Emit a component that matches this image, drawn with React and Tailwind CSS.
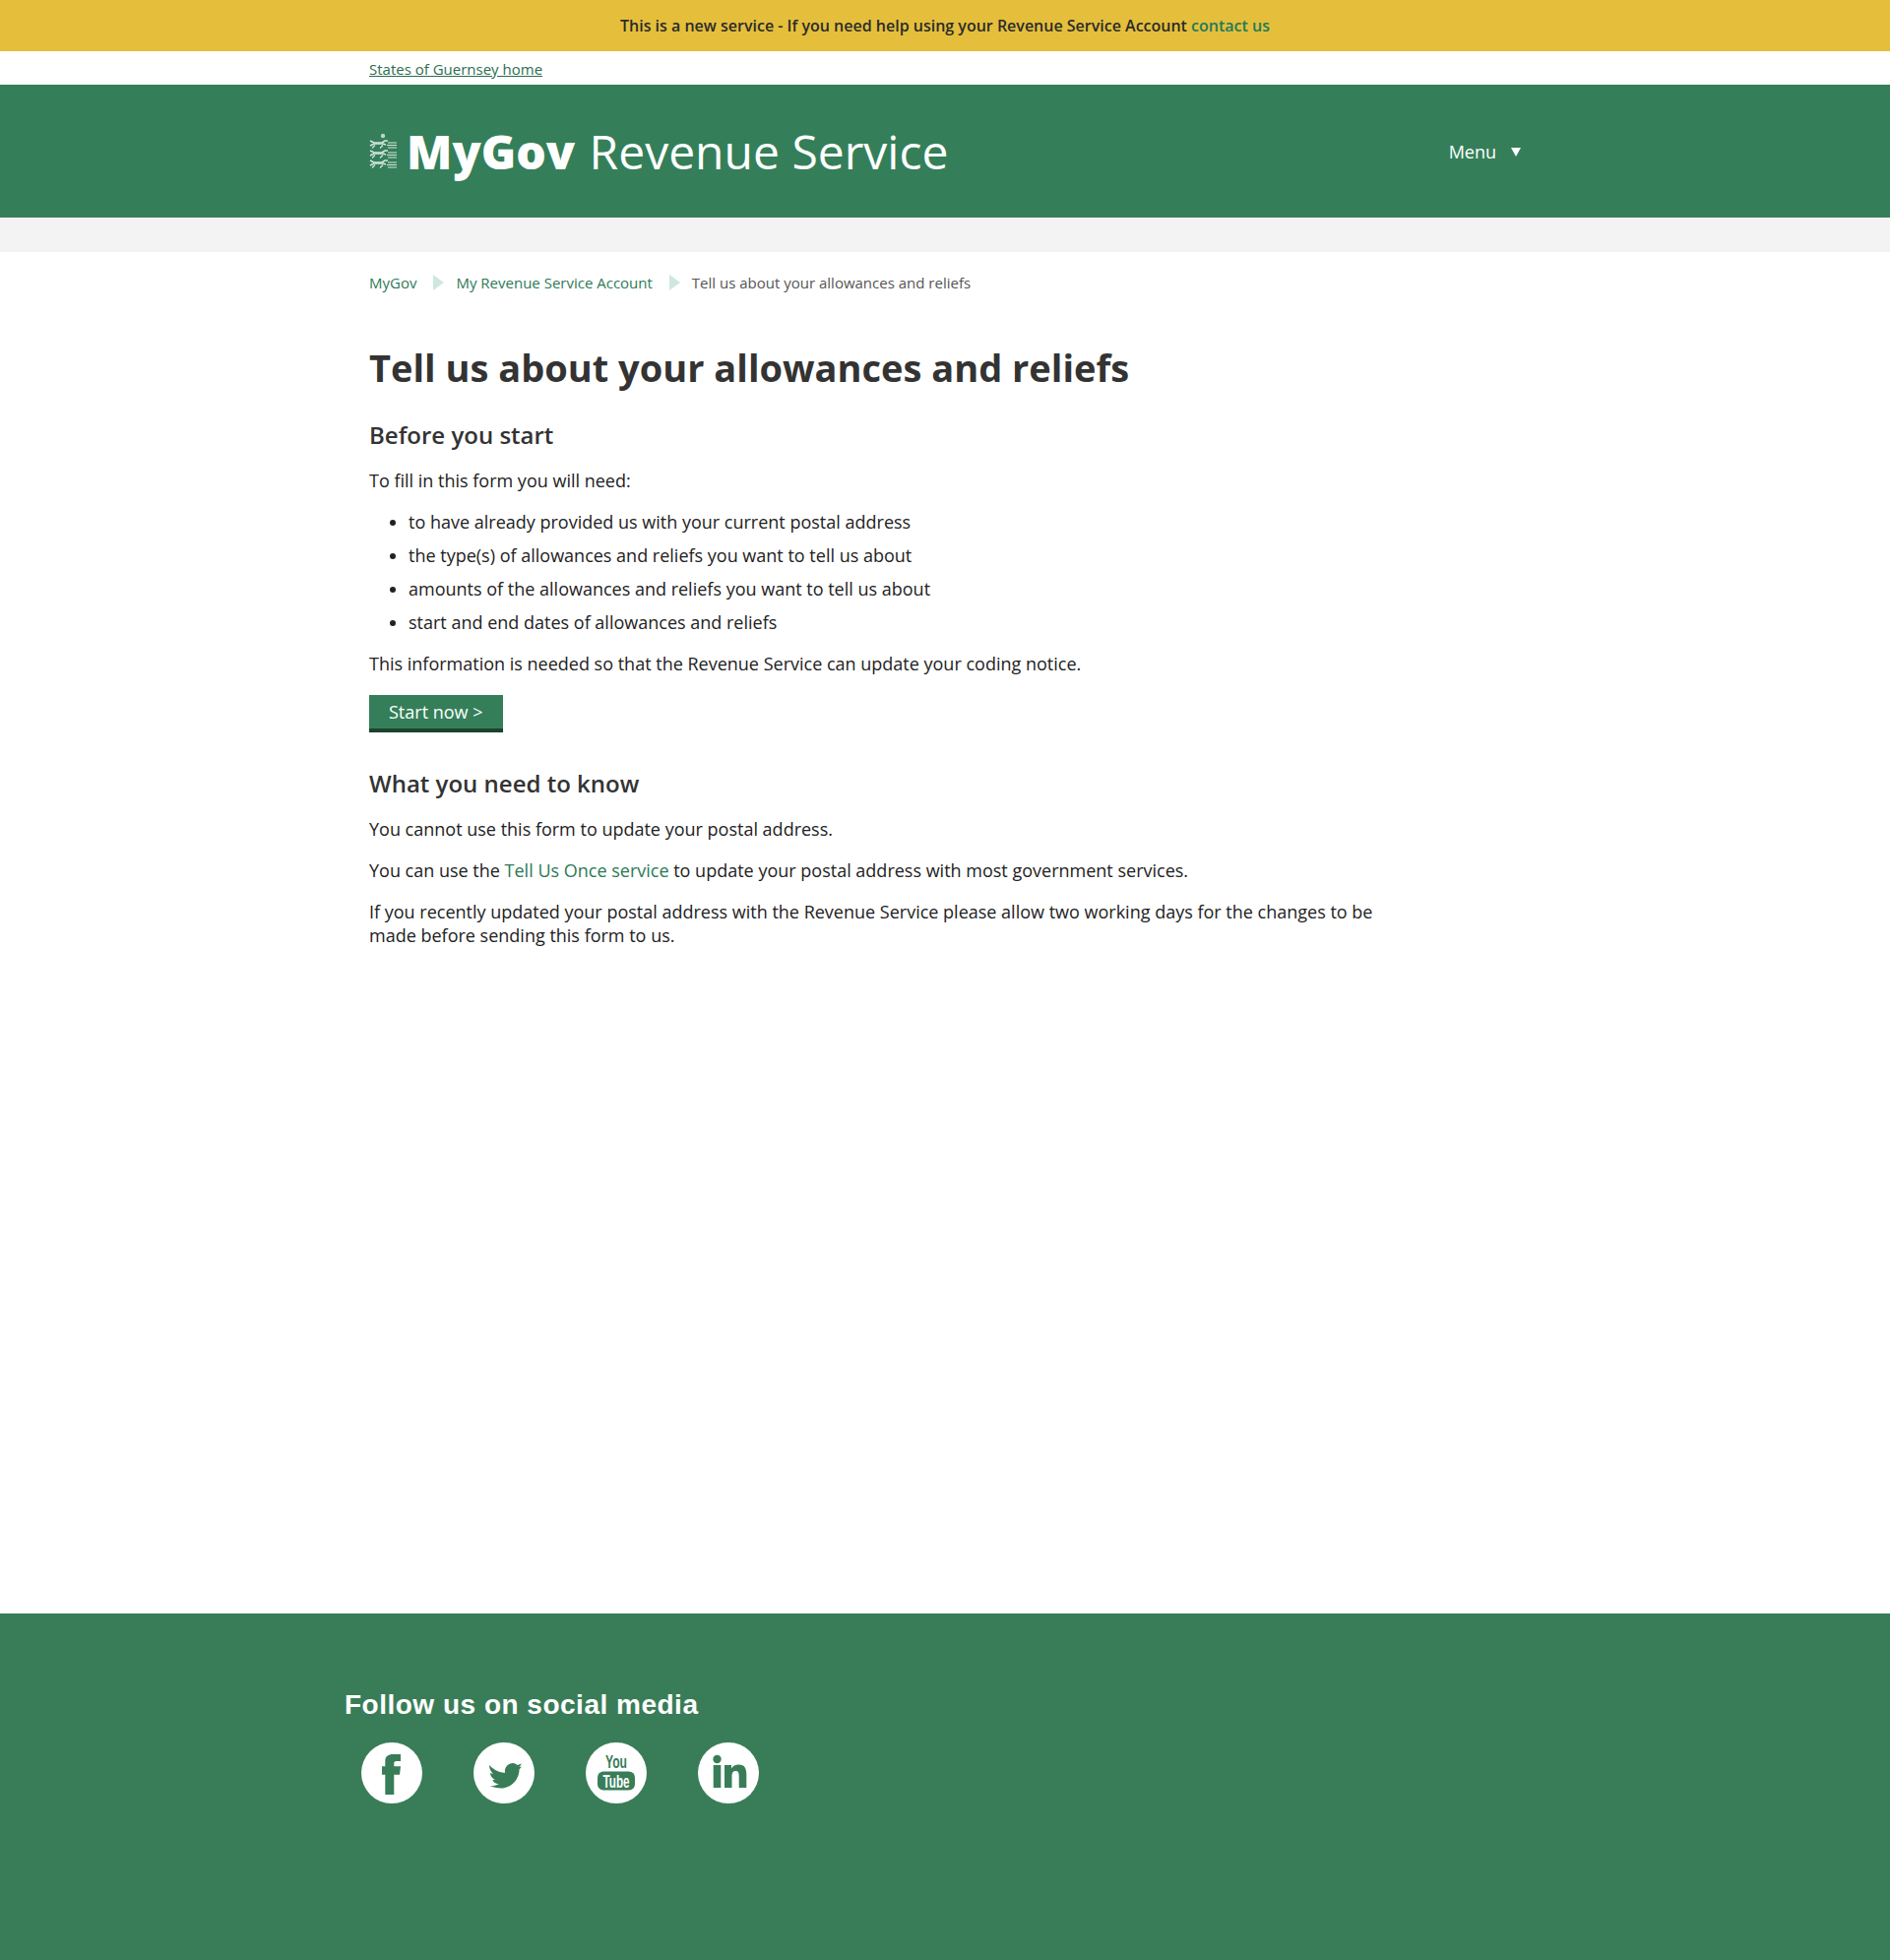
function Crest() {
  const rows = [7, 17, 27];
  return (
    <svg width="28" height="37" viewBox="0 0 28 37" className="shrink-0">
      <circle cx="14" cy="3" r="2.2" fill="#b9d6c6" />
      <g stroke="#ffffff" fill="none" opacity="0.8">
        {rows.map((y) => (
          <g key={y}>
            <path strokeWidth="1.6" d={`M1 ${y + 1}l4 2h8l3-2h3`} />
            <path strokeWidth="1.6" d={`M1 ${y + 6}l4-2h9l3 1`} />
            <path strokeWidth="1.2" d={`M3 ${y + 8.5}l3-3M11 ${y + 8.5}l3-3`} />
            <path strokeWidth="1.2" d={`M19 ${y + 3}h9M18 ${y + 5.5}h10M19 ${y + 8}h9`} />
          </g>
        ))}
      </g>
    </svg>
  );
}

function FacebookMark() {
  return (
    <svg width="62" height="62" viewBox="0 0 62 62" fill="#397d58">
      <path d="M24.3 53V32.7H21V24.3H24.3V19C24.3 14 27.5 12 32 12H40V19H35.5C34 19 33.3 20 33.3 21V24.3H40L39 32.7H33.3V53Z" />
    </svg>
  );
}

function TwitterMark() {
  return (
    <svg width="62" height="62" viewBox="0 0 62 62" fill="#397d58">
      <path transform="translate(-1 0)" d="M17 23C21 27 25 30 33 31C32 26 36 21 41 21C43 21 44.5 22 45.5 23L50 21.5L47.5 25L50 24.5L47.5 27.5C47.5 37 40 46.5 29 46.5C25 46.5 21 45.5 17.5 44C21 44.5 25 43.5 27 42C23 42 21 40 20.5 38L23 38C20 36.5 18 34 18 31L21 32C18 29 17 26 17 23Z" />
    </svg>
  );
}

function YouTubeMark() {
  return (
    <svg width="62" height="62" viewBox="0 0 62 62">
      <text x="31" y="26" textAnchor="middle" textLength="22" lengthAdjust="spacingAndGlyphs" fontFamily="Liberation Sans, sans-serif" fontWeight="700" fontSize="19" fill="#397d58">You</text>
      <rect x="12" y="29.5" width="38" height="19" rx="6" fill="#397d58" />
      <text x="31" y="46" textAnchor="middle" textLength="27" lengthAdjust="spacingAndGlyphs" fontFamily="Liberation Sans, sans-serif" fontWeight="700" fontSize="19" fill="#ffffff">Tube</text>
    </svg>
  );
}

function LinkedinMark() {
  return (
    <svg width="62" height="62" viewBox="0 0 62 62" fill="#397d58">
      <circle cx="19.5" cy="17" r="4.2" />
      <rect x="15.7" y="23" width="7.6" height="23" />
      <path d="M27 23H34V26.5C35.5 24 38 22.5 41.5 22.5C47.5 22.5 49.3 26.5 49.3 32.5V46H41.7V34C41.7 31 41 29 38.3 29C35.5 29 34.5 31 34.5 34V46H27Z" />
    </svg>
  );
}

function Social({ children }) {
  return (
    <a href="#" className="w-[62px] h-[62px] rounded-full bg-white flex items-center justify-center">
      {children}
    </a>
  );
}

function Crumb() {
  return <span className="ml-[17px] mr-[12px] w-0 h-0 border-y-[8px] border-y-transparent border-l-[11px] border-l-[#cfe8dd]" />;
}

export default function App() {
  return (
    <div className="min-h-[1991px] flex flex-col bg-white font-['Open_Sans',sans-serif] text-[18px] leading-[24px] text-[#222222]">
      <div className="h-[52px] bg-[#e5bf3b] flex items-center justify-center text-[16px] font-semibold text-[#2b2b2b]">
        <span>
          This is a new service - If you need help using your Revenue Service Account{' '}
          <a href="#" className="text-[#1f7a5c]">contact us</a>
        </span>
      </div>

      <div className="h-[34px] w-[1170px] mx-auto pt-[8px]">
        <a href="#" className="block text-[15px] leading-[20px] underline text-[#2c6e4f]">States of Guernsey home</a>
      </div>

      <header className="h-[135px] bg-[#347f59]">
        <div className="w-[1170px] h-full mx-auto flex items-center justify-between text-white">
          <div className="flex items-center gap-[10px]">
            <Crest />
            <span className="text-[48px] leading-none font-normal">
              <span className="font-extrabold mr-[2px]">MyGov</span> Revenue Service
            </span>
          </div>
          <button className="flex items-center gap-[15px] text-[18px] font-medium">
            Menu
            <span className="w-0 h-0 mt-[2px] border-x-[5px] border-x-transparent border-t-[9px] border-t-white" />
          </button>
        </div>
      </header>

      <div className="h-[35px] bg-[#f3f3f3]" />

      <main className="w-[1170px] mx-auto flex-1">
        <nav className="mt-[20px] flex items-center text-[15px] leading-[22px] text-[#555555]">
          <a href="#" className="text-[#2f7a58]">MyGov</a>
          <Crumb />
          <a href="#" className="text-[#2f7a58]">My Revenue Service Account</a>
          <Crumb />
          <span>Tell us about your allowances and reliefs</span>
        </nav>

        <h1 className="mt-[50px] text-[38px] leading-[50px] font-bold text-[#333333]">Tell us about your allowances and reliefs</h1>

        <div className="w-[1040px]">
          <h2 className="mt-[28px] text-[24px] leading-[32px] font-semibold text-[#333333]">Before you start</h2>
          <p className="mt-[18px]">To fill in this form you will need:</p>
          <ul className="mt-[18px] pl-[40px] list-disc flex flex-col gap-[10px]">
            <li>to have already provided us with your current postal address</li>
            <li>the type(s) of allowances and reliefs you want to tell us about</li>
            <li>amounts of the allowances and reliefs you want to tell us about</li>
            <li>start and end dates of allowances and reliefs</li>
          </ul>
          <p className="mt-[18px]">This information is needed so that the Revenue Service can update your coding notice.</p>
          <a href="#" className="mt-[20px] inline-block h-[38px] px-[20px] bg-[#347f59] border-b-4 border-[#1c4230] text-white text-[18px] leading-[34px]">Start now &gt;</a>

          <h2 className="mt-[36px] text-[24px] leading-[32px] font-semibold text-[#333333]">What you need to know</h2>
          <p className="mt-[18px]">You cannot use this form to update your postal address.</p>
          <p className="mt-[18px]">
            You can use the <a href="#" className="text-[#2c7a55]">Tell Us Once service</a> to update your postal address with most government services.
          </p>
          <p className="mt-[18px]">
            If you recently updated your postal address with the Revenue Service please allow two working days for the changes to be made before sending this form to us.
          </p>
        </div>
      </main>

      <footer className="h-[352px] bg-[#397d58]">
        <div className="w-[1220px] mx-auto pt-[77px] text-white">
          <h2 className="font-['Liberation_Sans',sans-serif] font-bold text-[28px] leading-[32px] tracking-[0.5px]">Follow us on social media</h2>
          <div className="mt-[22px] pl-[17px] flex gap-[52px]">
            <Social><FacebookMark /></Social>
            <Social><TwitterMark /></Social>
            <Social><YouTubeMark /></Social>
            <Social><LinkedinMark /></Social>
          </div>
        </div>
      </footer>
    </div>
  );
}
